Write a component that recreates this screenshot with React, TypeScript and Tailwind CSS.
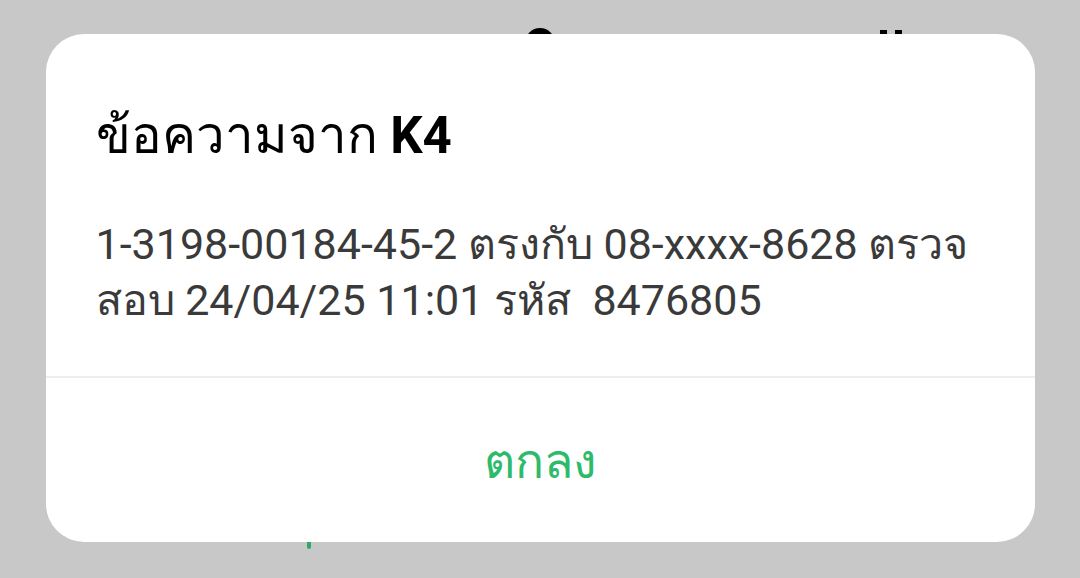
const App = () => {
  return (
    <div className="relative grid h-[578px] w-[1080px] place-items-center overflow-hidden bg-[#c8c8c8] font-['Roboto','Noto_Sans',sans-serif]">
      {/* what shows of the screen behind the dialog */}
      <div className="absolute inset-0 flex flex-col justify-between">
        <div className="flex items-start gap-[325px] pl-[525px] pt-[28px]">
          <div className="h-[30px] w-[30px] rounded-full bg-black" />
          <div className="flex gap-[8px] pt-[2px]">
            <div className="h-[10px] w-[7px] bg-black" />
            <div className="h-[10px] w-[7px] bg-black" />
          </div>
        </div>
        <div className="pb-[29px] pl-[307px]">
          <div className="h-[9px] w-[4px] rounded-b-full bg-[#2eaa62]" />
        </div>
      </div>

      <div className="relative mb-[2px] flex h-[508px] w-[989px] flex-col rounded-[38px] bg-white">
        <div className="px-[50px] pt-[74px]">
          <h1 className="text-[51px] leading-[56px] text-black">
            ข้อความจาก <span className="font-bold">K4</span>
          </h1>
          <p className="mt-[52px] text-[43px] leading-[56px] text-[#3a3a3a]">
            1-3198-00184-45-2 ตรงกับ 08-xxxx-8628 ตรวจ
            <br />
            สอบ 24/04/25 11:01 รหัส&nbsp; 8476805
          </p>
        </div>
        <div className="mt-auto h-[2px] bg-[#eeeeee]" />
        <button className="flex h-[164px] items-center justify-center pt-[4px] text-[48px] text-[#2dbb6b]">
          ตกลง
        </button>
      </div>
    </div>
  );
};

export default App;
